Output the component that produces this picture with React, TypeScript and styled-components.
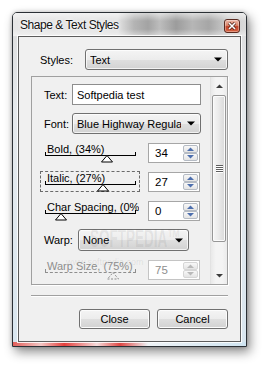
import React from "react";
import styled, { createGlobalStyle } from "styled-components";

const GlobalStyle = createGlobalStyle`
  html, body {
    margin: 0;
    padding: 0;
    background: #ffffff;
  }
  body {
    width: 267px;
    height: 367px;
    overflow: hidden;
    font-family: "Liberation Sans", Arial, sans-serif;
    font-size: 11px;
    color: #000;
  }
`;

const Page = styled.div`
  padding: 12px 0 0 12px;
`;

const Window = styled.div`
  width: 235px;
  height: 335px;
  box-sizing: border-box;
  display: flex;
  flex-direction: column;
  border: 1px solid #2b3035;
  border-radius: 5px 5px 0 0;
  padding: 0 5px 4px;
  background:
    linear-gradient(90deg, #e3605b 0%, #f3c6c4 12%, #e5403c 22%, #f6dcdc 36%, #df4743 46%, #eef3f6 58%, #cfe4f1 100%)
      left bottom / 100% 4px no-repeat,
    linear-gradient(180deg, #dcdcdc 0%, #e6eaed 30%, #d9e6ef 100%);
  box-shadow: 3px 5px 11px rgba(0, 0, 0, 0.45), 0 0 4px rgba(0, 0, 0, 0.2);
`;

const TitleBar = styled.div`
  height: 23px;
  flex: none;
  margin: 0 -5px;
  padding: 0 6px 0 7px;
  display: flex;
  justify-content: space-between;
  align-items: flex-start;
  border-radius: 4px 4px 0 0;
  background:
    linear-gradient(180deg, rgba(255, 255, 255, 0.55) 0%, rgba(255, 255, 255, 0) 35%, rgba(255, 255, 255, 0) 70%, rgba(255, 255, 255, 0.45) 100%),
    linear-gradient(90deg, #e6e6e6 0%, #e2e2e2 45%, #b4b4b4 52%, #a3a3a3 58%, #bdbdbd 63%, #9c9c9c 70%, #b6b6b6 77%, #a6a6a6 84%, #cdcdcd 92%, #dadada 100%);
`;

const Title = styled.span`
  line-height: 23px;
  padding-top: 1px;
  font-size: 12px;
  letter-spacing: -0.45px;
  color: #111;
  text-shadow: 0 0 5px #fff, 0 0 2px #fff;
  white-space: nowrap;
`;

const CloseBox = styled.div`
  width: 16px;
  height: 14px;
  margin-top: 6px;
  box-sizing: border-box;
  border: 1px solid #5a2a20;
  border-radius: 3px;
  display: flex;
  align-items: center;
  justify-content: center;
  background: linear-gradient(180deg, #ecb8a8 0%, #da8369 45%, #c2432a 55%, #d6623f 100%);
  box-shadow: inset 0 0 0 1px rgba(255, 255, 255, 0.35);
`;

const Client = styled.div`
  flex: 1;
  display: flex;
  flex-direction: column;
  padding: 12px 12px 0;
  border: 1px solid #5c5c5c;
  box-shadow: 0 0 0 1px rgba(255, 255, 255, 0.85);
  background: #f0f0f0;
`;

const Row = styled.div<{ $indent: number }>`
  display: flex;
  align-items: center;
  flex: none;
  padding-left: ${({ $indent }) => $indent}px;
`;

const FieldLabel = styled.span<{ $w: number }>`
  width: ${({ $w }) => $w}px;
  flex: none;
  white-space: nowrap;
`;

const Combo = styled.div<{ $w: number; $h: number }>`
  width: ${({ $w }) => $w}px;
  height: ${({ $h }) => $h}px;
  box-sizing: border-box;
  display: flex;
  align-items: center;
  padding: 0 5px 0 4px;
  border: 1px solid #707070;
  border-radius: 3px;
  background: linear-gradient(180deg, #f4f4f4 0%, #ececec 50%, #dfdfdf 51%, #d2d2d2 100%);
  box-shadow: inset 0 0 0 1px rgba(255, 255, 255, 0.7);
`;

const ComboText = styled.span`
  flex: 1;
  overflow: hidden;
  white-space: nowrap;
  margin-right: 6px;
`;

const TextBox = styled.div`
  width: 129px;
  height: 21px;
  box-sizing: border-box;
  display: flex;
  align-items: center;
  padding: 0 4px;
  border: 1px solid #8d8d8d;
  background: #fff;
  white-space: nowrap;
`;

const Panel = styled.div`
  position: relative;
  margin-top: 6px;
  height: 207px;
  flex: none;
  display: flex;
  overflow: hidden;
  border: 1px solid #a0a0a0;
  box-shadow: 1px 1px 0 #fff;
`;

const PanelBody = styled.div`
  flex: 1;
  display: flex;
  flex-direction: column;
  gap: 8px;
  padding-top: 7px;
`;

const SliderBox = styled.div<{ $focused?: boolean }>`
  width: 100px;
  height: 21px;
  box-sizing: border-box;
  flex: none;
  display: flex;
  flex-direction: column;
  margin-right: 8px;
  border: 1px dashed ${({ $focused }) => ($focused ? "#6a6a6a" : "transparent")};
`;

const SliderLabel = styled.span<{ $disabled?: boolean }>`
  height: 12px;
  line-height: 12px;
  padding-left: 6px;
  white-space: nowrap;
  overflow: hidden;
  color: ${({ $disabled }) => ($disabled ? "#8e8e8e" : "#000")};
`;

const Track = styled.div<{ $disabled?: boolean }>`
  position: relative;
  height: 3px;
  margin: -3px 3px 0 4px;
  border: 1px ${({ $disabled }) => ($disabled ? "dashed #8e8e8e" : "solid #000")};
  border-top: none;
`;

const Thumb = styled.svg<{ $at: number }>`
  position: absolute;
  top: 3px;
  left: ${({ $at }) => $at - 6.5}px;
`;

const Spin = styled.div<{ $disabled?: boolean }>`
  width: 52px;
  height: 20px;
  box-sizing: border-box;
  display: flex;
  padding: 1px;
  border: 1px solid ${({ $disabled }) => ($disabled ? "#c4c4c4" : "#a6a6a6")};
  background: #fff;
  color: ${({ $disabled }) => ($disabled ? "#8e8e8e" : "#000")};
`;

const SpinValue = styled.span`
  flex: 1;
  display: flex;
  align-items: center;
  padding-left: 5px;
  font-size: 11.5px;
`;

const SpinButtons = styled.div`
  width: 15px;
  display: flex;
  flex-direction: column;
`;

const SpinButton = styled.div<{ $disabled?: boolean }>`
  flex: 1;
  display: flex;
  align-items: center;
  justify-content: center;
  border: 1px solid ${({ $disabled }) => ($disabled ? "#d6d6d6" : "#b5bbc4")};
  border-radius: 2px;
  background: linear-gradient(180deg, #f8f8f8, #e4e4e4);
`;

const ScrollBar = styled.div`
  width: 16px;
  flex: none;
  display: flex;
  flex-direction: column;
  border-left: 1px solid #e2e2e2;
  background: linear-gradient(90deg, #e9e9e9, #f4f4f4 30%, #f4f4f4 70%, #ebebeb);
`;

const ScrollArrow = styled.div`
  height: 17px;
  flex: none;
  display: flex;
  align-items: center;
  justify-content: center;
`;

const ScrollThumb = styled.div`
  height: 145px;
  flex: none;
  margin: 1px 1px 0;
  display: flex;
  align-items: center;
  justify-content: center;
  border: 1px solid #979797;
  border-radius: 2px;
  background: linear-gradient(90deg, #f6f6f6 0%, #ebebeb 45%, #d9d9d9 100%);
  box-shadow: inset 0 0 0 1px #fbfbfb;
`;

const Grip = styled.div`
  width: 7px;
  height: 8px;
  background: repeating-linear-gradient(180deg, #5e5e5e 0 1px, #ffffff 1px 2px);
`;

const ScrollTrack = styled.div`
  flex: 1;
`;

const Watermark = styled.span`
  position: absolute;
  left: 58px;
  top: 148px;
  font-size: 26px;
  line-height: 26px;
  font-weight: bold;
  color: rgba(90, 90, 90, 0.1);
  transform: scaleX(0.52);
  transform-origin: left top;
  white-space: nowrap;
  pointer-events: none;
`;

const WatermarkUrl = styled.span`
  position: absolute;
  left: 34px;
  top: 180px;
  font-size: 9px;
  color: rgba(90, 90, 90, 0.12);
  white-space: nowrap;
  pointer-events: none;
`;

const Separator = styled.div`
  margin-top: 10px;
  flex: none;
  border-top: 1px solid #a0a0a0;
  border-bottom: 1px solid #ffffff;
`;

const ButtonRow = styled.div`
  display: flex;
  justify-content: flex-end;
  gap: 7px;
  margin-top: 12px;
`;

const Button = styled.button`
  width: 71px;
  height: 20px;
  padding: 0;
  font-family: "Liberation Sans", Arial, sans-serif;
  font-size: 11px;
  color: #000;
  border: 1px solid #707070;
  border-radius: 3px;
  background: linear-gradient(180deg, #f4f4f4 0%, #ececec 50%, #dfdfdf 51%, #d2d2d2 100%);
  box-shadow: inset 0 0 0 1px #fcfcfc;
`;

const DropArrow = () => (
  <svg width="8" height="5" viewBox="0 0 8 5">
    <path d="M0 0.5H8L4 4.5Z" fill="#000" />
  </svg>
);

const SmallArrow = ({ up, color }: { up?: boolean; color: string }) => (
  <svg width="7" height="4" viewBox="0 0 7 4">
    <path d={up ? "M0 4H7L3.5 0.5Z" : "M0 0H7L3.5 3.5Z"} fill={color} />
  </svg>
);

interface SliderProps {
  label: string;
  value: number;
  at: number;
  focused?: boolean;
  disabled?: boolean;
}

const SliderRow = ({ label, value, at, focused, disabled }: SliderProps) => (
  <Row $indent={8}>
    <SliderBox $focused={focused}>
      <SliderLabel $disabled={disabled}>{label}</SliderLabel>
      <Track $disabled={disabled}>
        <Thumb $at={at} width="12" height="8" viewBox="0 0 12 8">
          <polygon
            points="6,0.5 11.5,7 0.5,7"
            fill={disabled ? "none" : "#fff"}
            stroke={disabled ? "#8e8e8e" : "#000"}
            strokeDasharray={disabled ? "2 1.5" : undefined}
          />
        </Thumb>
      </Track>
    </SliderBox>
    <Spin $disabled={disabled}>
      <SpinValue>{value}</SpinValue>
      <SpinButtons>
        <SpinButton $disabled={disabled}>
          <SmallArrow up color={disabled ? "#b9b9b9" : "#4d6fae"} />
        </SpinButton>
        <SpinButton $disabled={disabled}>
          <SmallArrow color={disabled ? "#b9b9b9" : "#4d6fae"} />
        </SpinButton>
      </SpinButtons>
    </Spin>
  </Row>
);

const App = () => (
  <Page>
    <GlobalStyle />
    <Window>
      <TitleBar>
        <Title>Shape &amp; Text Styles</Title>
        <CloseBox>
          <svg width="8" height="8" viewBox="0 0 8 8">
            <path d="M1 1L7 7M7 1L1 7" stroke="#4a1c12" strokeWidth="3" />
            <path d="M1 1L7 7M7 1L1 7" stroke="#fff" strokeWidth="1.6" />
          </svg>
        </CloseBox>
      </TitleBar>
      <Client>
        <Row $indent={9}>
          <FieldLabel $w={45}>Styles:</FieldLabel>
          <Combo $w={143} $h={21}>
            <ComboText>Text</ComboText>
            <DropArrow />
          </Combo>
        </Row>
        <Panel>
          <PanelBody>
            <Row $indent={12}>
              <FieldLabel $w={28}>Text:</FieldLabel>
              <TextBox>Softpedia test</TextBox>
            </Row>
            <Row $indent={12}>
              <FieldLabel $w={28}>Font:</FieldLabel>
              <Combo $w={129} $h={21}>
                <ComboText>Blue Highway Regular</ComboText>
                <DropArrow />
              </Combo>
            </Row>
            <SliderRow label="Bold, (34%)" value={34} at={61} />
            <SliderRow label="Italic, (27%)" value={27} at={57} focused />
            <SliderRow label="Char Spacing, (0%)" value={0} at={15.5} />
            <Row $indent={12}>
              <FieldLabel $w={34}>Warp:</FieldLabel>
              <Combo $w={111} $h={22}>
                <ComboText>None</ComboText>
                <DropArrow />
              </Combo>
            </Row>
            <SliderRow label="Warp Size, (75%)" value={75} at={67.5} disabled />
          </PanelBody>
          <ScrollBar>
            <ScrollArrow>
              <SmallArrow up color="#3c3c3c" />
            </ScrollArrow>
            <ScrollThumb>
              <Grip />
            </ScrollThumb>
            <ScrollTrack />
            <ScrollArrow>
              <SmallArrow color="#3c3c3c" />
            </ScrollArrow>
          </ScrollBar>
          <Watermark>SOFTPEDIA™</Watermark>
          <WatermarkUrl>www.softpedia.com</WatermarkUrl>
        </Panel>
        <Separator />
        <ButtonRow>
          <Button>Close</Button>
          <Button>Cancel</Button>
        </ButtonRow>
      </Client>
    </Window>
  </Page>
);

export default App;
